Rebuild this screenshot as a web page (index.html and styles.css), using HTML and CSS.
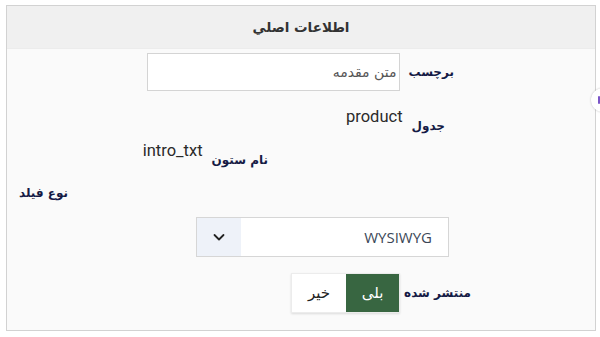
FILE: index.html
```html
<!DOCTYPE html>
<html lang="fa">
<head>
<meta charset="utf-8">
<title>اطلاعات اصلي</title>
<link rel="stylesheet" href="styles.css">
</head>
<body>
<div class="card">
  <div class="card-header">اطلاعات اصلي</div>
  <div class="card-body">
    <div class="row row-label">
      <span class="label">برچسب</span>
      <div class="input">متن مقدمه</div>
    </div>
    <div class="row row-table">
      <span class="label label-low">جدول</span>
      <span class="value">product</span>
    </div>
    <div class="row row-column">
      <span class="label label-low">نام ستون</span>
      <span class="value">intro_txt</span>
    </div>
    <div class="row row-type">
      <span class="label">نوع فیلد</span>
    </div>
    <div class="row row-select">
      <div class="select">
        <span class="select-text">WYSIWYG</span>
        <span class="select-arrow">
          <svg width="14" height="14" viewBox="0 0 14 14"><path d="M2.5 5l4.5 4.5L11.5 5" fill="none" stroke="#222" stroke-width="1.8" stroke-linecap="round" stroke-linejoin="round"/></svg>
        </span>
      </div>
    </div>
    <div class="row row-publish">
      <span class="label">منتشر شده</span>
      <div class="toggle">
        <span class="opt opt-on">بلی</span>
        <span class="opt">خیر</span>
      </div>
    </div>
  </div>
</div>
<div class="side-bubble"><span class="side-dot"></span></div>
</body>
</html>
```
FILE: styles.css
```css
html, body {
  margin: 0;
  padding: 0;
  background: #ffffff;
  width: 600px;
  height: 337px;
  overflow: hidden;
}
body {
  font-family: Roboto, "DejaVu Sans", sans-serif;
  padding: 5px 5px 0 6px;
  box-sizing: border-box;
}
.card {
  direction: rtl;
  border: 1px solid #d2d2d2;
  background: #fafafa;
  width: 590px;
  box-sizing: border-box;
}
.card-header {
  height: 42px;
  background: #f0f0f0;
  border-bottom: 1px solid #ececec;
  display: flex;
  align-items: center;
  justify-content: center;
  font-family: "DejaVu Sans", sans-serif;
  font-weight: bold;
  font-size: 13.5px;
  color: #333;
}
.card-body {
  padding: 4px 0 17px 0;
}
.row {
  display: flex;
  align-items: center;
}
.label {
  font-family: "DejaVu Sans", sans-serif;
  font-weight: bold;
  font-size: 12px;
  line-height: 16px;
  color: #151a45;
  white-space: nowrap;
}
.label-low {
  padding-top: 10px;
}
.value {
  font-family: Roboto, sans-serif;
  font-size: 16.5px;
  line-height: 18px;
  color: #2a2a2a;
}
.row-label {
  padding-right: 141px;
  gap: 8px;
}
.input {
  width: 253px;
  height: 38px;
  box-sizing: border-box;
  border: 1px solid #d4d4d4;
  background: #fff;
  display: flex;
  align-items: center;
  padding-right: 3px;
  font-family: "DejaVu Sans", sans-serif;
  font-size: 14px;
  color: #555;
}
.row-table {
  align-items: flex-start;
  margin-top: 17px;
  padding-right: 150px;
  gap: 9px;
}
.row-column {
  align-items: flex-start;
  margin-top: 8px;
  padding-right: 327px;
  gap: 9px;
}
.row-type {
  margin-top: 17px;
  padding-right: 527px;
}
.row-select {
  margin-top: 16px;
  padding-right: 146px;
}
.select {
  width: 253px;
  height: 40px;
  box-sizing: border-box;
  border: 1px solid #d6d6d6;
  background: #fff;
  display: flex;
  align-items: stretch;
}
.select-text {
  flex: 1;
  display: flex;
  align-items: center;
  padding-right: 16px;
  font-family: "Open Sans", "DejaVu Sans", sans-serif;
  font-size: 15px;
  color: #3b4757;
}
.select-arrow {
  width: 44px;
  background: #eef2f9;
  display: flex;
  align-items: center;
  justify-content: center;
}
.select-arrow svg {
  display: block;
}
.row-publish {
  margin-top: 16px;
  padding-right: 124px;
  gap: 4px;
}
.toggle {
  display: flex;
  height: 40px;
  box-shadow: 0 1px 2px rgba(0,0,0,0.12);
  border: 1px solid #ececec;
  box-sizing: border-box;
}
.opt {
  width: 54px;
  display: flex;
  align-items: center;
  justify-content: center;
  font-family: "DejaVu Sans", sans-serif;
  font-size: 15px;
  color: #222;
  background: #fff;
}
.opt-on {
  width: 53px;
  background: #386641;
  color: #fff;
}
.side-bubble {
  position: fixed;
  left: 591px;
  top: 88px;
  width: 24px;
  height: 24px;
  border-radius: 50%;
  background: #fff;
  box-shadow: 0 0 2px rgba(0,0,0,0.25);
  display: flex;
  align-items: center;
}
.side-dot {
  margin-left: 7px;
  width: 2px;
  height: 8px;
  border-radius: 1px;
  background: #7a55c8;
}
```
